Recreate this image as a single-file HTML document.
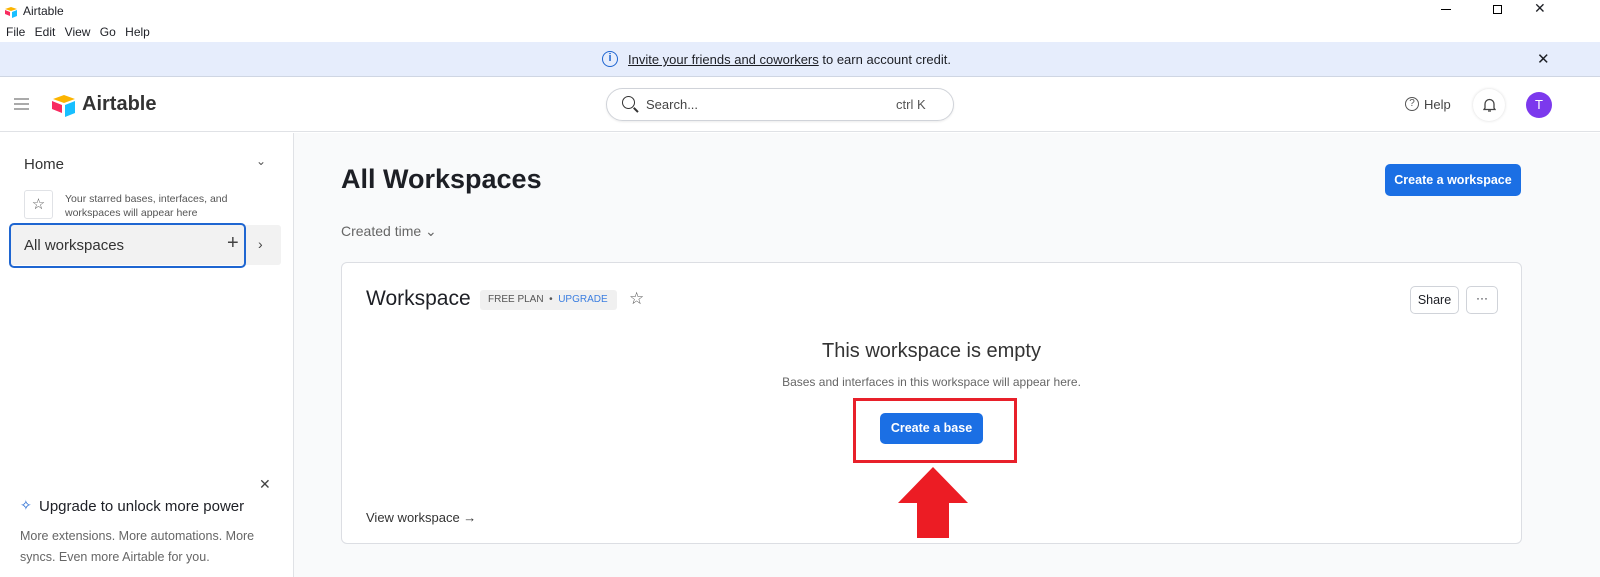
<!DOCTYPE html>
<html><head><style>
*{box-sizing:border-box;margin:0;padding:0}
body{width:1600px;height:577px;overflow:hidden;font-family:"Liberation Sans",sans-serif;background:#fff;position:relative;color:#1d1f25}
.a{position:absolute}
</style></head><body>
<!-- title bar -->
<div class="a" style="left:4px;top:5px;width:14px;height:12px">
<svg width="14" height="12" viewBox="0 0 14 12"><path d="M1 3l6-2 6 2-6 2z" fill="#fcb400"/><path d="M8 6l5-2v6l-5 2z" fill="#18bfff"/><path d="M1 4l5 2v4L1 8z" fill="#f82b60"/></svg></div>
<div class="a" style="left:23px;top:4px;font-size:12px">Airtable</div>
<div class="a" style="left:6px;top:25px;font-size:12px;word-spacing:6px">File Edit View Go Help</div>
<div class="a" style="left:1441px;top:9px;width:10px;height:1px;background:#000"></div>
<div class="a" style="left:1493px;top:5px;width:9px;height:9px;border:1px solid #000"></div>
<div class="a" style="left:1534px;top:0px;font-size:14px">✕</div>
<!-- banner -->
<div class="a" style="left:0;top:42px;width:1600px;height:35px;background:#e6edfc;border-bottom:1px solid #cfd6e3"></div>
<div class="a" style="left:602px;top:51px;width:16px;height:16px;border:1.5px solid #1f66d1;border-radius:50%;color:#1f66d1;font-size:11px;text-align:center;line-height:13px;font-weight:bold">i</div>
<div class="a" style="left:628px;top:52px;font-size:13px;color:#1d1f25"><span style="text-decoration:underline">Invite your friends and coworkers</span> to earn account credit.</div>
<div class="a" style="left:1537px;top:50px;font-size:15px">✕</div>
<!-- header -->
<div class="a" style="left:0;top:78px;width:1600px;height:54px;border-bottom:1px solid #e0e2e6"></div>
<div class="a" style="left:14px;top:98px;width:15px;height:2px;background:#aaa;box-shadow:0 5px 0 #aaa,0 10px 0 #aaa"></div>
<div class="a" style="left:51px;top:94px"><svg width="26" height="24" viewBox="0 0 26 24"><path d="M2 5l11-4 11 4-11 4z" fill="#fcb400"/><path d="M14 11l10-4v12l-10 4z" fill="#18bfff"/><path d="M1 7l10 4v8L1 15z" fill="#f82b60"/></svg></div>
<div class="a" style="left:82px;top:93px;font-size:20px;font-weight:bold;color:#333">Airtable</div>
<div class="a" style="left:606px;top:88px;width:348px;height:33px;border:1px solid #d0d3d9;border-radius:17px;box-shadow:0 1px 2px rgba(0,0,0,.08)"></div>
<div class="a" style="left:622px;top:96px;width:13px;height:13px;border:1.6px solid #333;border-radius:50%"></div>
<div class="a" style="left:633px;top:109px;width:6px;height:1.6px;background:#333;transform:rotate(45deg)"></div>
<div class="a" style="left:646px;top:97px;font-size:13px;color:#444">Search...</div>
<div class="a" style="left:896px;top:97px;font-size:13px;color:#555">ctrl K</div>
<div class="a" style="left:1405px;top:97px;width:14px;height:14px;border:1.5px solid #555;border-radius:50%;font-size:10px;text-align:center;line-height:11px;color:#555">?</div>
<div class="a" style="left:1424px;top:97px;font-size:13px;color:#444">Help</div>
<div class="a" style="left:1473px;top:89px;width:32px;height:32px;border-radius:50%;box-shadow:0 0 3px rgba(0,0,0,.15)"></div>
<div class="a" style="left:1483px;top:97px"><svg width="13" height="16" viewBox="0 0 13 16"><path d="M2 11V7a4.5 4.5 0 019 0v4l1 1.5H1z M5 14h3" fill="none" stroke="#444" stroke-width="1.3"/></svg></div>
<div class="a" style="left:1526px;top:92px;width:26px;height:26px;border-radius:50%;background:#7c39ed;color:#fff;font-size:13px;text-align:center;line-height:26px">T</div>
<!-- sidebar -->
<div class="a" style="left:293px;top:133px;width:1px;height:444px;background:#e0e2e6"></div>
<div class="a" style="left:24px;top:156px;font-size:15px;color:#333">Home</div>
<div class="a" style="left:256px;top:154px;font-size:12px;color:#555">⌄</div>
<div class="a" style="left:24px;top:190px;width:29px;height:29px;border:1px solid #e0e2e6;border-radius:3px;text-align:center;line-height:28px;color:#555;font-size:15px">☆</div>
<div class="a" style="left:65px;top:192px;font-size:10.5px;color:#555;line-height:14px">Your starred bases, interfaces, and<br>workspaces will appear here</div>
<div class="a" style="left:9px;top:225px;width:272px;height:40px;background:#f2f2f2;border-radius:3px"></div>
<div class="a" style="left:9px;top:223px;width:237px;height:45px;border:2px solid #1f66d1;border-radius:5px"></div>
<div class="a" style="left:24px;top:237px;font-size:15px;color:#333">All workspaces</div>
<div class="a" style="left:227px;top:232px;font-size:20px;color:#444">+</div>
<div class="a" style="left:258px;top:236px;font-size:14px;color:#444">›</div>
<div class="a" style="left:259px;top:476px;font-size:14px;color:#444">✕</div>
<div class="a" style="left:20px;top:497px;font-size:14px;color:#1f66d1">✧</div>
<div class="a" style="left:39px;top:498px;font-size:15px;color:#1d1f25">Upgrade to unlock more power</div>
<div class="a" style="left:20px;top:526px;font-size:12.5px;color:#666;line-height:21px">More extensions. More automations. More<br>syncs. Even more Airtable for you.</div>
<!-- main -->
<div class="a" style="left:294px;top:133px;width:1306px;height:444px;background:#f9fafb"></div>
<div class="a" style="left:341px;top:164px;font-size:27px;font-weight:bold;color:#1d1f25">All Workspaces</div>
<div class="a" style="left:1385px;top:164px;width:136px;height:32px;background:#1b6fe4;border-radius:5px;color:#fff;font-size:12.5px;font-weight:bold;text-align:center;line-height:32px">Create a workspace</div>
<div class="a" style="left:341px;top:223px;font-size:14px;color:#666">Created time ⌄</div>
<div class="a" style="left:341px;top:262px;width:1181px;height:282px;background:#fff;border:1px solid #dcdee3;border-radius:6px"></div>
<div class="a" style="left:366px;top:287px;font-size:21px;color:#1d1f25">Workspace</div>
<div class="a" style="left:480px;top:290px;width:137px;height:20px;background:#f0f0f0;border-radius:3px;font-size:10px;line-height:20px;padding-left:8px;color:#555">FREE PLAN &nbsp;•&nbsp; <span style="color:#3b7ee0">UPGRADE</span></div>
<div class="a" style="left:629px;top:289px;font-size:17px;color:#555">☆</div>
<div class="a" style="left:1410px;top:286px;width:49px;height:28px;border:1px solid #d0d3d9;border-radius:5px;font-size:12.5px;text-align:center;line-height:26px">Share</div>
<div class="a" style="left:1466px;top:286px;width:32px;height:28px;border:1px solid #d0d3d9;border-radius:5px;font-size:12px;text-align:center;line-height:22px">···</div>
<div class="a" style="left:341px;top:340px;width:1181px;text-align:center;font-size:20px;color:#333">This workspace is empty</div>
<div class="a" style="left:341px;top:375px;width:1181px;text-align:center;font-size:12px;color:#666">Bases and interfaces in this workspace will appear here.</div>
<div class="a" style="left:853px;top:398px;width:164px;height:65px;border:3px solid #e8202a"></div>
<div class="a" style="left:880px;top:413px;width:103px;height:31px;background:#1b6fe4;border-radius:5px;color:#fff;font-size:12.5px;font-weight:bold;text-align:center;line-height:31px">Create a base</div>
<div class="a" style="left:366px;top:510px;font-size:13px;color:#333">View workspace →</div>
<svg class="a" style="left:897px;top:467px" width="72" height="71" viewBox="0 0 72 71"><path d="M36 0L71 36H52V71H20V36H1z" fill="#ec1c24"/></svg>
</body></html>
